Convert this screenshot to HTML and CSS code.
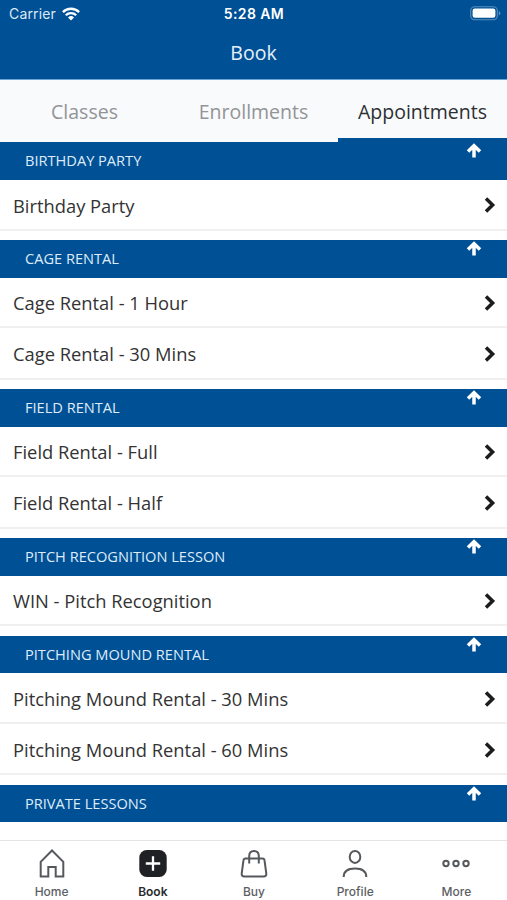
FILE: index.html
```html
<!DOCTYPE html>
<html lang="en">
<head>
<meta charset="utf-8">
<title>Book</title>
<link rel="stylesheet" href="styles.css">
</head>
<body>
<svg class="defs" width="0" height="0" aria-hidden="true">
  <symbol id="up" viewBox="0 0 16 16"><path d="M8 14.400V3.500M2 8.500 8 2.700l6 5.800" fill="none" stroke="currentColor" stroke-width="3.5"/></symbol>
  <symbol id="chevron" viewBox="0 0 12 16"><path d="M2 1.5 8.6 8 2 14.5" fill="none" stroke="currentColor" stroke-width="3.5"/></symbol>
</svg>
<div class="app">
  <header class="top">
    <div class="status">
      <div class="carrier"><span>Carrier</span>
        <svg width="18" height="14" viewBox="0 0 18 14" fill="none" stroke="#fff" stroke-width="2.3"><path d="M.9 5.1a11.5 11.5 0 0 1 16.2 0M3.8 8.2a7.4 7.4 0 0 1 10.4 0"/><path d="M9 13.5 6 10.5a4.3 4.3 0 0 1 6 0z" fill="#fff" stroke="none"/></svg>
      </div>
      <div class="time">5:28 AM</div>
      <svg class="battery" width="31" height="15" viewBox="0 0 31 15"><rect x=".7" y=".7" width="26.6" height="13" rx="4" fill="none" stroke="#5b8fbf" stroke-width="1.1"/><rect x="2.6" y="2.6" width="22.8" height="9.2" rx="2.2" fill="#fff"/><path d="M28.8 5v4.4q1.6-.6 1.6-2.2T28.8 5z" fill="#5b8fbf"/></svg>
    </div>
    <h1>Book</h1>
  </header>
  <nav class="tabs">
    <div class="tab">Classes</div>
    <div class="tab">Enrollments</div>
    <div class="tab active">Appointments</div>
  </nav>
  <main>
    <section>
      <h2>BIRTHDAY PARTY<svg class="up"><use href="#up"/></svg></h2>
      <div class="row">Birthday Party<svg class="chev"><use href="#chevron"/></svg></div>
    </section>
    <section>
      <h2>CAGE RENTAL<svg class="up"><use href="#up"/></svg></h2>
      <div class="row">Cage Rental - 1 Hour<svg class="chev"><use href="#chevron"/></svg></div>
      <div class="row">Cage Rental - 30 Mins<svg class="chev"><use href="#chevron"/></svg></div>
    </section>
    <section>
      <h2>FIELD RENTAL<svg class="up"><use href="#up"/></svg></h2>
      <div class="row">Field Rental - Full<svg class="chev"><use href="#chevron"/></svg></div>
      <div class="row">Field Rental - Half<svg class="chev"><use href="#chevron"/></svg></div>
    </section>
    <section>
      <h2>PITCH RECOGNITION LESSON<svg class="up"><use href="#up"/></svg></h2>
      <div class="row">WIN - Pitch Recognition<svg class="chev"><use href="#chevron"/></svg></div>
    </section>
    <section>
      <h2>PITCHING MOUND RENTAL<svg class="up"><use href="#up"/></svg></h2>
      <div class="row">Pitching Mound Rental - 30 Mins<svg class="chev"><use href="#chevron"/></svg></div>
      <div class="row">Pitching Mound Rental - 60 Mins<svg class="chev"><use href="#chevron"/></svg></div>
    </section>
    <section>
      <h2>PRIVATE LESSONS<svg class="up"><use href="#up"/></svg></h2>
    </section>
  </main>
  <footer class="bar">
    <div class="item"><svg viewBox="0 0 30 30"><path d="M3.7 27.500V12.800L15 1.500l11.300 11.300V27.500h-7.600v-9.500h-7.400v9.500z"/></svg>Home</div>
    <div class="item current"><svg viewBox="0 0 30 30"><rect x="1.3" y="1" width="27.4" height="27" rx="7.5" fill="#202124" stroke="none"/><path d="M15 7.3v14.4M7.8 14.5h14.4" stroke="#fff" stroke-width="2.3"/></svg>Book</div>
    <div class="item"><svg viewBox="0 0 30 30"><path d="M6.500 9.400h17q1.800 0 2 1.800L27.300 24.500q.3 3-2.700 3H5.400q-3 0-2.700-3L4.500 11.200q.2-1.800 2-1.800zM10.200 14.500V7q0-5 4.800-5t4.800 5v7.500"/></svg>Buy</div>
    <div class="item"><svg viewBox="0 0 30 30"><ellipse cx="15" cy="7.900" rx="5.300" ry="6"/><path d="M3.700 28c0-5.500 4-8.500 11.300-8.500s11.300 3 11.300 8.500"/></svg>Profile</div>
    <div class="item"><svg viewBox="0 0 30 30"><circle cx="5" cy="14.500" r="2.700"/><circle cx="15" cy="14.500" r="2.700"/><circle cx="25" cy="14.500" r="2.700"/></svg>More</div>
  </footer>
</div>
</body>
</html>
```

FILE: styles.css
```css
* { box-sizing: border-box; }
body { margin: 0; background: #fff; color: #333; font-family: "Open Sans", "Noto Sans", sans-serif; }
.defs { display: block; }
.app { display: flex; flex-direction: column; width: 507px; height: 900px; overflow: hidden; }
.top { flex: none; height: 79px; background: #005096; color: #fff; }
.status { display: grid; grid-template-columns: 1fr auto 1fr; align-items: center; height: 27px; padding: 0 6px 0 9px; font-family: Inter, sans-serif; font-size: 14px; }
.carrier { display: flex; align-items: center; gap: 6px; color: #dce9f5; letter-spacing: .15px; }
.time { margin-left: -2px; font-weight: 600; letter-spacing: .4px; }
.battery { justify-self: end; }
h1 { margin: 0; font-size: 19.500px; font-weight: 400; line-height: 52px; text-align: center; color: #e8f1f9; }
.tabs { display: grid; flex: none; grid-template-columns: 1fr 1fr 1fr; height: 63.300px; border-top: 1px solid #69a5d4; background: #f8fafc; }
.tab { height: 62.300px; padding-top: 3px; font-size: 19.500px; line-height: 57px; text-align: center; color: #929497; }
.active { border-bottom: 4px solid #005096; color: #2d2f33; }
main { flex: 1; min-height: 0; overflow: hidden; }
section { padding-bottom: 9.400px; }
h2 { display: flex; justify-content: space-between; height: 37.700px; margin: 0; padding: 0 25px; background: #005096; color: #dfecf8; font-size: 14.600px; font-weight: 400; line-height: 37px; }
.up { width: 16px; height: 16px; margin-top: 1px; color: #fff; }
.row { display: flex; align-items: center; justify-content: space-between; height: 51.350px; padding: 2px 10.500px 0 13px; border-bottom: 2px solid #f0f0f0; font-size: 18.330px; }
h2 + .row { height: 50.600px; }
.chev { width: 14px; height: 16px; color: #1c1c1c; }
.bar { display: grid; flex: none; grid-template-columns: repeat(5, 101.200px); justify-content: center; height: 60px; padding-left: 1px; border-top: 1px solid #e3e4e6; background: #fff; }
.item { display: flex; flex-direction: column; align-items: center; padding-top: 8px; color: #5d6064; font-family: Inter, sans-serif; font-size: 12px; font-weight: 500; line-height: 25px; }
.item svg { width: 30px; height: 30px; fill: none; stroke: #55585c; stroke-width: 2; }
.current { color: #292b2e; font-weight: 600; }
```
